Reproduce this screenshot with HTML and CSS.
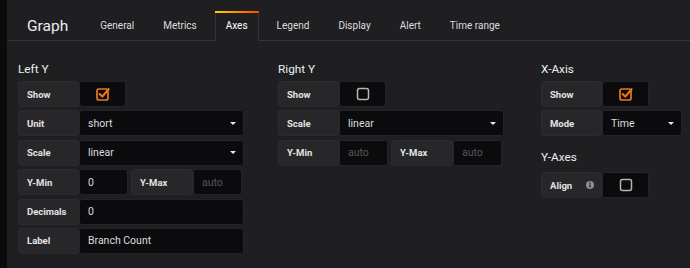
FILE: index.html
```html
<!DOCTYPE html>
<html lang="en">
<head>
<meta charset="UTF-8" />
<title>Graph - Axes</title>
<link rel="stylesheet" href="styles.css">
</head>
<body>

<div class="app">
  <div class="sidebar"></div>

  <div class="main">
    <!-- Editor header with tabs -->
    <div class="edit-header">
      <h2 class="edit-title">Graph</h2>
      <ul class="tabs">
        <li class="tab">General</li>
        <li class="tab">Metrics</li>
        <li class="tab active">Axes</li>
        <li class="tab">Legend</li>
        <li class="tab">Display</li>
        <li class="tab">Alert</li>
        <li class="tab">Time range</li>
      </ul>
    </div>

    <div class="edit-body">
      <!-- Left Y -->
      <div class="section section-y">
        <h5 class="section-heading">Left Y</h5>
        <div class="form-row">
          <label class="form-label">Show</label>
          <div class="form-check">
            <svg class="check" viewBox="0 0 16 16" width="16" height="16">
              <rect x="2" y="3" width="11" height="11" rx="2" fill="none" stroke="#eb7b18" stroke-width="1.7"/>
              <polyline points="4.6,8 7.3,10.6 13.6,3.2" fill="none" stroke="#eb7b18" stroke-width="2.1" stroke-linecap="round" stroke-linejoin="round"/>
            </svg>
          </div>
        </div>
        <div class="form-row">
          <label class="form-label">Unit</label>
          <div class="form-input select">short<span class="caret"></span></div>
        </div>
        <div class="form-row">
          <label class="form-label">Scale</label>
          <div class="form-input select">linear<span class="caret"></span></div>
        </div>
        <div class="form-row">
          <label class="form-label">Y-Min</label>
          <div class="form-input small">0</div>
          <label class="form-label wide gap">Y-Max</label>
          <div class="form-input small placeholder">auto</div>
        </div>
        <div class="form-row">
          <label class="form-label">Decimals</label>
          <div class="form-input">0</div>
        </div>
        <div class="form-row">
          <label class="form-label">Label</label>
          <div class="form-input">Branch Count</div>
        </div>
      </div>

      <!-- Right Y -->
      <div class="section section-y section-right">
        <h5 class="section-heading">Right Y</h5>
        <div class="form-row">
          <label class="form-label">Show</label>
          <div class="form-check">
            <svg class="check" viewBox="0 0 16 16" width="16" height="16">
              <rect x="2.5" y="2.5" width="11" height="11" rx="2" fill="none" stroke="#b5b5b5" stroke-width="1.5"/>
            </svg>
          </div>
        </div>
        <div class="form-row">
          <label class="form-label">Scale</label>
          <div class="form-input select">linear<span class="caret"></span></div>
        </div>
        <div class="form-row">
          <label class="form-label">Y-Min</label>
          <div class="form-input small placeholder">auto</div>
          <label class="form-label wide gap">Y-Max</label>
          <div class="form-input small placeholder">auto</div>
        </div>
      </div>

      <!-- X-Axis / Y-Axes -->
      <div class="section section-x">
        <h5 class="section-heading">X-Axis</h5>
        <div class="form-row">
          <label class="form-label">Show</label>
          <div class="form-check">
            <svg class="check" viewBox="0 0 16 16" width="16" height="16">
              <rect x="2" y="3" width="11" height="11" rx="2" fill="none" stroke="#eb7b18" stroke-width="1.7"/>
              <polyline points="4.6,8 7.3,10.6 13.6,3.2" fill="none" stroke="#eb7b18" stroke-width="2.1" stroke-linecap="round" stroke-linejoin="round"/>
            </svg>
          </div>
        </div>
        <div class="form-row">
          <label class="form-label">Mode</label>
          <div class="form-input select mode">Time<span class="caret"></span></div>
        </div>

        <h5 class="section-heading sub">Y-Axes</h5>
        <div class="form-row">
          <label class="form-label with-icon">Align
            <svg class="info" viewBox="0 0 8 8" width="8" height="8">
              <circle cx="4" cy="4" r="4" fill="#8f8f92"/>
              <circle cx="4" cy="2.1" r="0.8" fill="#27272a"/>
              <rect x="3.3" y="3.4" width="1.4" height="3" fill="#27272a"/>
            </svg>
          </label>
          <div class="form-check">
            <svg class="check" viewBox="0 0 16 16" width="16" height="16">
              <rect x="2.5" y="2.5" width="11" height="11" rx="2" fill="none" stroke="#b5b5b5" stroke-width="1.5"/>
            </svg>
          </div>
        </div>
      </div>
    </div>
  </div>
</div>

</body>
</html>
```

FILE: styles.css
```css
body {
  margin: 0;
  background: #1f1f21;
  font-family: Roboto, 'Liberation Sans', sans-serif;
  color: #d8d9da;
}
.app {
  display: flex;
  height: 268px;
  overflow: hidden;
}
.sidebar {
  width: 7px;
  background: #0b0b0c;
  flex-shrink: 0;
}
.main {
  flex: 1;
}

/* header + tabs */
.edit-header {
  display: flex;
  align-items: flex-end;
  height: 40px;
  border-bottom: 1px solid #333335;
  padding-left: 20px;
}
.edit-title {
  margin: 0;
  font-size: 15.5px;
  font-weight: 400;
  line-height: 28px;
  color: #e9edf2;
}
.tabs {
  display: flex;
  gap: 7px;
  list-style: none;
  margin: 0 0 0 21px;
  padding: 0;
}
.tab {
  height: 28px;
  line-height: 28px;
  padding: 0 10px;
  border: 1px solid transparent;
  border-bottom: none;
  font-size: 10px;
  color: #dcdddf;
}
.tab.active {
  position: relative;
  border-color: #333335;
  background: #1f1f21;
  color: #fff;
  height: 29px;
  margin-bottom: -1px;
}
.tab.active::before {
  content: '';
  position: absolute;
  left: -1px;
  right: -1px;
  top: -1px;
  height: 2px;
  background: linear-gradient(to right, #ffd500, #ff4400);
}

/* body */
.edit-body {
  display: flex;
  padding: 21px 11px 0;
}
.section-y {
  width: 226px;
  margin-right: 34px;
}
.section-right {
  margin-right: 37px;
}
.section-x {
  width: 141px;
}
.section-heading {
  margin: 0 0 5px;
  font-size: 11.8px;
  font-weight: 400;
  line-height: 14px;
  color: #eceff3;
}
.section-heading.sub {
  margin-top: 14px;
  margin-bottom: 8px;
}

.form-row {
  display: flex;
  height: 26px;
  margin-bottom: 3.4px;
}
.form-label {
  width: 61px;
  flex-shrink: 0;
  box-sizing: border-box;
  display: flex;
  align-items: center;
  padding-left: 8px;
  background: #27272a;
  border: 1px solid #2c2c30;
  border-radius: 3px;
  font-size: 9.5px;
  font-weight: 700;
  color: #e3e3e3;
}
.form-label.wide {
  width: 62px;
}
.form-label.gap {
  margin-left: 3px;
}
.form-label.with-icon {
  justify-content: space-between;
  padding-right: 7px;
}
.form-input {
  flex: 1;
  box-sizing: border-box;
  display: flex;
  align-items: center;
  padding: 0 7px 0 8px;
  background: #0b0b0d;
  border: 1px solid #242427;
  border-radius: 3px;
  font-size: 10.5px;
  color: #dcdddf;
}
.form-input.small {
  flex: none;
  width: 49px;
}
.form-input.placeholder {
  color: #56575a;
}
.form-input.mode {
  flex: none;
  width: 80px;
}
.caret {
  margin-left: auto;
  width: 0;
  height: 0;
  border-left: 3px solid transparent;
  border-right: 3px solid transparent;
  border-top: 3px solid #e8e8e8;
}
.form-check {
  width: 47px;
  box-sizing: border-box;
  display: flex;
  align-items: center;
  justify-content: center;
  background: #0b0b0d;
  border: 1px solid #242427;
  border-radius: 3px;
}
.check {
  display: block;
}
.info {
  display: block;
}
```
